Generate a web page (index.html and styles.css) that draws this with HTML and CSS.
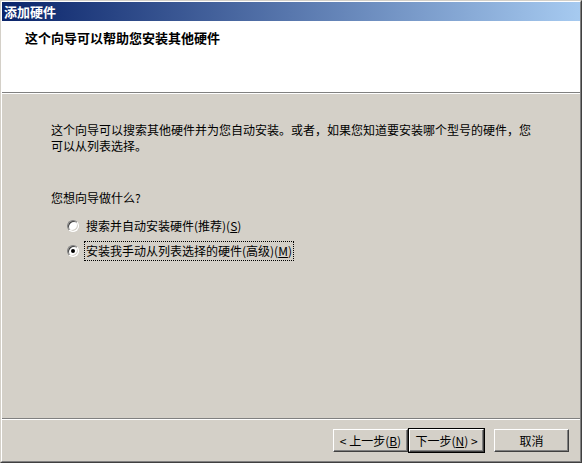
FILE: index.html
```html
<!DOCTYPE html>
<html lang="zh-CN">
<head>
<meta charset="utf-8">
<title>添加硬件</title>
<link rel="stylesheet" href="styles.css">
</head>
<body>
<div class="window">
  <div class="inner">
    <div class="titlebar">添加硬件</div>
    <div class="header">
      <div class="header-title">这个向导可以帮助您安装其他硬件</div>
    </div>
    <div class="sep"></div>
    <div class="content">
      <p class="desc">这个向导可以搜索其他硬件并为您自动安装。或者，如果您知道要安装哪个型号的硬件，您可以从列表选择。</p>
      <p class="question">您想向导做什么?</p>
      <div class="options">
        <label class="option">
          <span class="radio"></span>
          <span class="label">搜索并自动安装硬件(推荐)(<u>S</u>)</span>
        </label>
        <label class="option">
          <span class="radio checked"></span>
          <span class="label focus">安装我手动从列表选择的硬件(高级)(<u>M</u>)</span>
        </label>
      </div>
    </div>
    <div class="sep"></div>
    <div class="buttons">
      <button class="btn">&lt; 上一步(<u>B</u>)</button>
      <button class="btn default">下一步(<u>N</u>) &gt;</button>
      <button class="btn cancel">取消</button>
    </div>
  </div>
</div>
</body>
</html>
```

FILE: styles.css
```css
html, body {
  margin: 0;
  padding: 0;
  width: 582px;
  height: 463px;
  overflow: hidden;
  background: #d4d0c8;
  font-family: "Noto Sans CJK SC", "Noto Sans", sans-serif;
  font-size: 12px;
  color: #000;
}

.window {
  box-sizing: border-box;
  width: 582px;
  height: 463px;
  border: 1px solid;
  border-color: #d4d0c8 #404040 #404040 #d4d0c8;
  background: #d4d0c8;
}

.inner {
  box-sizing: border-box;
  height: 100%;
  border: 1px solid;
  border-color: #ffffff #808080 #808080 #ffffff;
  display: flex;
  flex-direction: column;
}

.titlebar {
  height: 19px;
  line-height: 19px;
  padding-left: 2px;
  color: #fff;
  font-weight: bold;
  font-size: 13px;
  background: linear-gradient(to right, #0a246a, #a6caf0);
}

.header {
  height: 71px;
  background: #fff;
  box-sizing: border-box;
  padding: 8px 0 0 23px;
}

.header-title {
  font-weight: bold;
  font-size: 13px;
  line-height: 18px;
}

.sep {
  height: 0;
  border-top: 1px solid #808080;
  border-bottom: 1px solid #ffffff;
}

.content {
  flex: 1;
  padding: 28px 0 0 49px;
}

.desc {
  margin: 0;
  width: 484px;
  line-height: 16px;
}

.question {
  margin: 36px 0 0 0;
  line-height: 16px;
}

.options {
  margin-top: 12px;
  padding-left: 16px;
  display: flex;
  flex-direction: column;
  gap: 9px;
}

.option {
  display: flex;
  align-items: center;
  gap: 6px;
  height: 16px;
}

.radio {
  box-sizing: border-box;
  width: 12px;
  height: 12px;
  border-radius: 50%;
  border: 1px solid;
  border-color: #808080 #ffffff #ffffff #808080;
  background: #fff;
  box-shadow: inset 1px 1px 0 #404040, inset -1px -1px 0 #d4d0c8;
  position: relative;
}

.radio.checked::after {
  content: "";
  position: absolute;
  left: 3px;
  top: 3px;
  width: 4px;
  height: 4px;
  border-radius: 50%;
  background: #000;
}

.label {
  line-height: 16px;
  padding: 1px 1px;
}

.label.focus {
  outline: 1px dotted #000;
}

.buttons {
  height: 41px;
  box-sizing: border-box;
  padding: 9px 11px 0 0;
  display: flex;
  justify-content: flex-end;
  align-items: flex-start;
}

.btn {
  box-sizing: border-box;
  width: 75px;
  height: 23px;
  padding: 0;
  font-family: inherit;
  font-size: 12px;
  color: #000;
  background: #d4d0c8;
  border: 1px solid;
  border-color: #ffffff #404040 #404040 #ffffff;
  box-shadow: inset -1px -1px 0 #808080;
}

.btn.default {
  outline: 1px solid #000;
  outline-offset: 0;
  border-color: #ffffff #404040 #404040 #ffffff;
  margin-left: 1px;
}

.btn.cancel {
  margin-left: 10px;
}
```
